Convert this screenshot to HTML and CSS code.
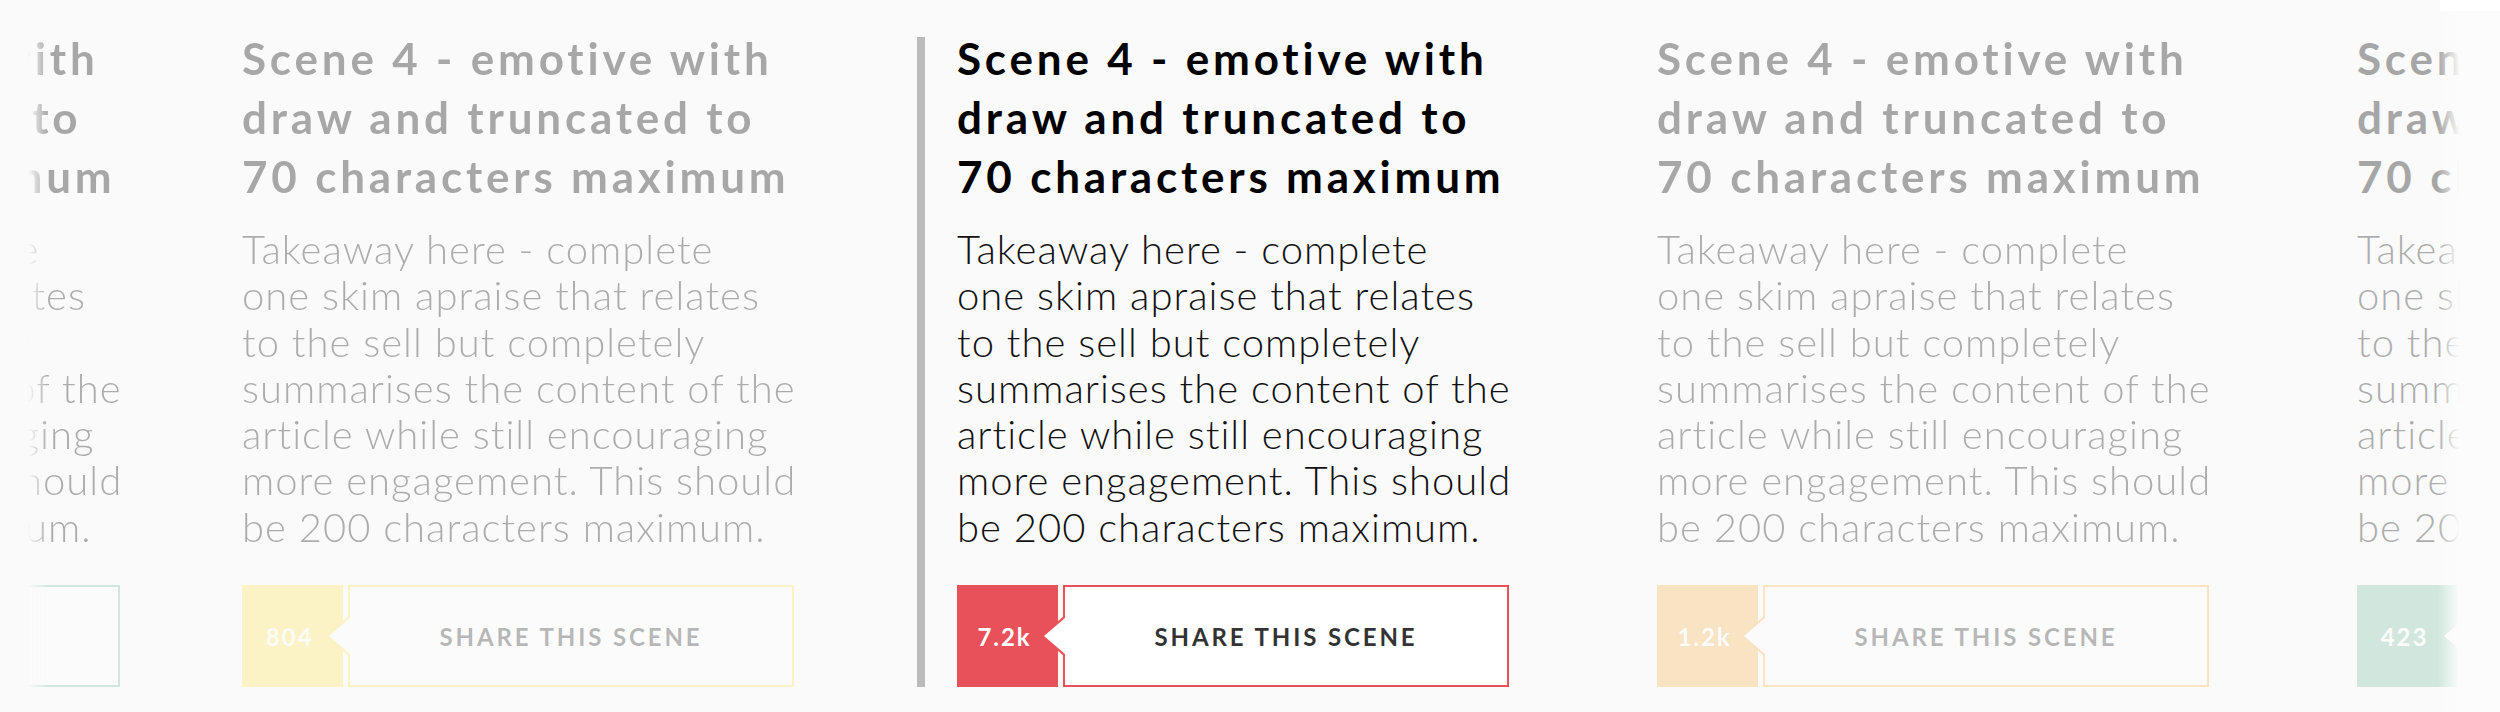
FILE: index.html
```html
<!DOCTYPE html>
<html lang="en">
<head>
    <meta charset="UTF-8">
    <meta name="viewport" content="width=device-width, initial-scale=1.0">
    <title>Scenes</title>
    <link rel="stylesheet" href="styles.css">
</head>
<body>
    <div class="scenes">
        <div class="slider">
            <div class="slide slide--prev slide--green">
                <h2>Scene 4 - emotive with draw and truncated to 70 characters maximum</h2>
                <p>Takeaway here - complete<br>one skim apraise that relates<br>to the sell but completely<br>summarises the content of the<br>article while still encouraging<br>more engagement. This should<br>be 200 characters maximum.</p>
                <div class="share-row">
                    <span class="count">2.4k</span>
                    <a class="share" href="#">Share this scene</a>
                </div>
            </div>
            <div class="slide slide--prev slide--yellow">
                <h2>Scene 4 - emotive with draw and truncated to 70 characters maximum</h2>
                <p>Takeaway here - complete<br>one skim apraise that relates<br>to the sell but completely<br>summarises the content of the<br>article while still encouraging<br>more engagement. This should<br>be 200 characters maximum.</p>
                <div class="share-row">
                    <span class="count">804</span>
                    <a class="share" href="#">Share this scene</a>
                </div>
            </div>
            <div class="slide slide--active slide--red">
                <h2>Scene 4 - emotive with draw and truncated to 70 characters maximum</h2>
                <p>Takeaway here - complete<br>one skim apraise that relates<br>to the sell but completely<br>summarises the content of the<br>article while still encouraging<br>more engagement. This should<br>be 200 characters maximum.</p>
                <div class="share-row">
                    <span class="count">7.2k</span>
                    <a class="share" href="#">Share this scene</a>
                </div>
            </div>
            <div class="slide slide--orange">
                <h2>Scene 4 - emotive with draw and truncated to 70 characters maximum</h2>
                <p>Takeaway here - complete<br>one skim apraise that relates<br>to the sell but completely<br>summarises the content of the<br>article while still encouraging<br>more engagement. This should<br>be 200 characters maximum.</p>
                <div class="share-row">
                    <span class="count">1.2k</span>
                    <a class="share" href="#">Share this scene</a>
                </div>
            </div>
            <div class="slide slide--green">
                <h2>Scene 4 - emotive with draw and truncated to 70 characters maximum</h2>
                <p>Takeaway here - complete<br>one skim apraise that relates<br>to the sell but completely<br>summarises the content of the<br>article while still encouraging<br>more engagement. This should<br>be 200 characters maximum.</p>
                <div class="share-row">
                    <span class="count">423</span>
                    <a class="share" href="#">Share this scene</a>
                </div>
            </div>
        </div>
        <div class="fade fade-left"></div>
        <div class="fade fade-right"></div>
    </div>
</body>
</html>
```

FILE: styles.css
```css
/* page */
html, body {
    margin: 0;
    height: 100%;
    background-color: #fafafa;
    font-family: Lato, "Noto Sans", sans-serif;
    color: #111;
    overflow: hidden;
}

.scenes {
    position: relative;
    height: 712px;
    overflow: hidden;
}

/* carousel track */
.slider {
    display: flex;
    gap: 148px;
    margin-left: -432px;
    padding-top: 37px;
}

.slide {
    flex: none;
    width: 552px;
    height: 650px;
    display: flex;
    flex-direction: column;
    opacity: 0.33;
}

.slide--prev {
    margin-right: -26px;
}

.slide--active {
    opacity: 1;
    margin-left: 1px;
    padding-left: 32px;
    border-left: 8px solid #bbb;
}

.slide h2 {
    margin: -8px -6px 0 0;
    font-size: 44px;
    font-weight: 700;
    line-height: 59px;
    letter-spacing: 3.8px;
    color: #000;
}

/* lines are set by the copy, 200 characters max */
.slide p {
    margin: 20px -10px 0 0;
    font-size: 40px;
    font-weight: 300;
    line-height: 46.3px;
    letter-spacing: 1px;
    white-space: nowrap;
}

/* share button */
.share-row {
    flex: none;
    display: flex;
    gap: 5px;
    height: 102px;
    margin-top: auto;
}

.count {
    width: 101px;
    display: flex;
    align-items: center;
    justify-content: center;
    padding-right: 6px;
    box-sizing: border-box;
    font-size: 24px;
    font-weight: 700;
    letter-spacing: 0.08em;
    color: #fff;
    background-color: var(--accent);
}

.share {
    position: relative;
    flex: 1;
    display: flex;
    align-items: center;
    justify-content: center;
    border: 2px solid var(--accent);
    background-color: #fff;
    font-size: 24px;
    font-weight: 700;
    letter-spacing: 0.12em;
    text-transform: uppercase;
    text-decoration: none;
    color: #333;
}

/* arrow pointing at the count */
.share::before,
.share::after {
    content: "";
    position: absolute;
    right: 100%;
    top: 50%;
    border-style: solid;
    border-color: transparent;
}

.share::before {
    margin-top: -21px;
    border-width: 21px 24px 21px 0;
    border-right-color: var(--accent);
}

.share::after {
    margin-top: -18px;
    border-width: 18px 21px 18px 0;
    border-right-color: #fff;
}

/* accents */
.slide--red { --accent: #e8515a; }
.slide--yellow { --accent: #ffe35b; }
.slide--orange { --accent: #f4b653; }
.slide--green { --accent: #7fc3a4; }

/* edge fades */
.fade {
    position: absolute;
    top: 0;
    bottom: 0;
}

.fade-left {
    left: 0;
    width: 48px;
    background: linear-gradient(to right, #fafafa 28px, rgba(250, 250, 250, 0));
}

.fade-right {
    left: 2438px;
    right: 0;
    background: linear-gradient(to right, rgba(252, 252, 252, 0), #fcfcfc 22px);
}

.fade-right::before {
    content: "";
    position: absolute;
    top: 0;
    left: 2px;
    right: 0;
    height: 11px;
    background-color: #fff;
}
```
